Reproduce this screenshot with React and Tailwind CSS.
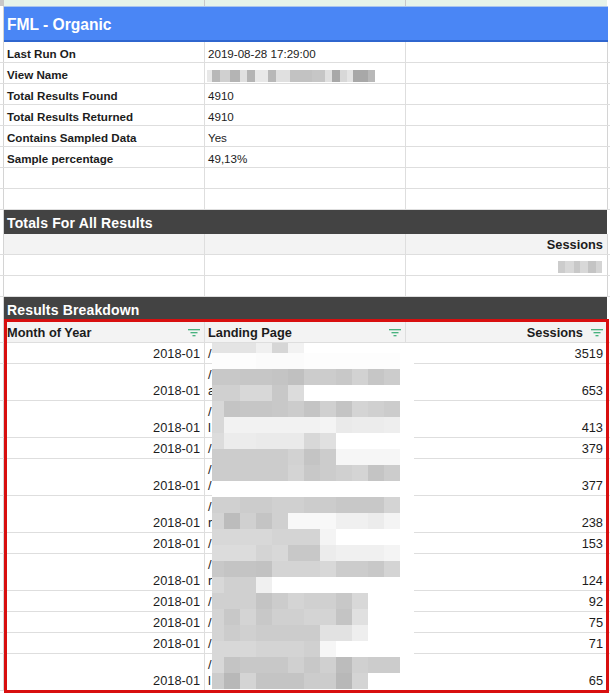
const FONT = "font-['Liberation_Sans',Arial,sans-serif]";

// pixelated blur over the landing page column, one line per 16px band
const mosaic = [
  ['e4','e4','e4','f0','d6','f2','ff','ff','ff','ff','ff','ff'],
  ['fd','fd','fd','fb','fb','fb','fd','fd','fd','fd','fd','fd'],
  ['c8','c8','c6','c6','c4','c0','cc','cc','c8','d2','c6','cc'],
  ['d0','d0','d8','d8','c8','dc','ff','ff','ff','ff','ff','ff'],
  ['d8','c4','c6','c6','c8','cc','c4','d0','c4','d4','d0','cc'],
  ['d8','f2','f2','f2','f2','f2','f2','f4','ea','ec','ec','ee'],
  ['dc','ec','ec','ea','ea','ea','d8','e0','ff','ff','ff','ff'],
  ['cc','cc','cc','cc','cc','d2','c4','cc','f6','f6','f6','f6'],
  ['cc','cc','cc','cc','cc','d4','c8','cc','d0','d4','c4','cc'],
  ['ff','ff','ff','ff','ff','ff','ff','ff','ff','ff','ff','ff'],
  ['d0','d0','cc','cc','d0','d0','cc','cc','c8','c8','c8','d4'],
  ['d4','bc','d0','c4','d0','f8','f8','f8','f0','f0','ec','f4'],
  ['d8','d8','d8','d8','d4','d4','d4','f4','ff','ff','ff','ff'],
  ['dc','dc','dc','d4','d8','c8','c8','ec','f0','f0','f0','f4'],
  ['c8','c4','c4','c2','d4','d4','d4','d8','cc','cc','c8','d4'],
  ['d8','d0','d0','f0','ff','ff','ff','ff','ff','ff','ff','ff'],
  ['d0','d0','d0','c4','cc','d4','d0','d0','c8','d8','ff','ff'],
  ['d4','c8','d4','c8','d0','d0','d4','d4','c4','e0','ff','ff'],
  ['d4','cc','d0','cc','cc','cc','cc','e2','e2','ee','ff','ff'],
  ['d8','d8','d8','d4','d4','d4','d0','f6','ff','ff','ff','ff'],
  ['d8','c4','c8','c8','c8','d0','c8','d0','bc','d0','cc','cc'],
  ['cc','b8','d4','c4','c4','c4','cc','cc','b8','d4','ff','ff'],
];
const mosaicX = [0, 12, 28, 44, 60, 76, 92, 108, 124, 140, 156, 172, 188];

const viewNameCells = [
  [0, 5, 'e8'], [5, 8, 'b8'], [13, 10, 'd0'], [23, 10, 'b4'], [33, 7, 'e0'], [40, 8, 'b4'],
  [48, 13, 'e8'], [61, 8, 'b8'], [69, 14, 'e0'], [83, 22, 'c2'], [105, 13, 'c6'], [118, 7, 'e0'],
  [125, 8, 'a8'], [133, 7, 'd8'], [140, 6, 'e4'], [146, 15, 'a8'], [161, 7, 'b8'],
];

const sessionCells = [
  [0, 7, 'cc'], [7, 9, 'd8'], [16, 6, 'c8'], [22, 8, 'd8'], [30, 8, 'c4'], [38, 6, 'd4'],
];

const infoRows = [
  ['Last Run On', '2019-08-28 17:29:00'],
  ['View Name', ''],
  ['Total Results Found', '4910'],
  ['Total Results Returned', '4910'],
  ['Contains Sampled Data', 'Yes'],
  ['Sample percentage', '49,13%'],
  ['', ''],
  ['', ''],
];

const dataRows = [
  ['/', 3519, false],
  ['/\na', 653, true],
  ['/\nl', 413, true],
  ['/', 379, false],
  ['/\n/', 377, true],
  ['/\nr', 238, true],
  ['/', 153, false],
  ['/\nr', 124, true],
  ['/', 92, false],
  ['/', 75, false],
  ['/', 71, false],
  ['/\nl', 65, true],
];

function Row({ height, bg = 'bg-white', children }) {
  return (
    <div className={`flex ${height} border-b border-[#dedede]`}>
      <div className="w-[4px] shrink-0 border-r border-[#d4d4d4]" />
      <div className={`grid grid-cols-[201px_201px_201px] ${bg}`}>{children}</div>
      <div className="w-[3px] border-l border-[#d4d4d4]" />
    </div>
  );
}

function Cell({ right, bold, small, last, children }) {
  return (
    <div
      className={`flex items-end whitespace-pre-line px-[3px] leading-[16px] text-[#1c1c1c] ${
        small ? 'text-[11.6px]' : 'pb-px text-[12.8px]'
      } ${right ? 'justify-end pr-1 text-right' : ''} ${bold ? 'font-bold' : ''} ${
        last ? '' : 'border-r border-[#dedede]'
      }`}
    >
      {children}
    </div>
  );
}

function FilterIcon() {
  return (
    <svg width="12" height="8" viewBox="0 0 12 8" className="absolute right-[4px] top-[7px]">
      <path d="M0 .75h12M2.5 3.75h7M4.5 6.75h3" stroke="#0f9d58" strokeWidth="1.2" fill="none" />
    </svg>
  );
}

function HeaderCell({ right, last, children }) {
  return (
    <div
      className={`relative flex items-end px-[3px] pb-px text-[12.8px] font-bold leading-[16px] text-[#1c1c1c] ${
        right ? 'justify-end pr-[24px]' : ''
      } ${last ? '' : 'border-r border-[#dedede]'}`}
    >
      {children}
      <FilterIcon />
    </div>
  );
}

function DarkBar({ height, children }) {
  return (
    <div className={`flex ${height}`}>
      <div className="w-[4px] shrink-0 border-r border-[#d4d4d4]" />
      <div className="w-[603px] bg-[#434343] pl-[3px] text-[14px] font-bold leading-[26px] tracking-[0.15px] text-white">
        {children}
      </div>
    </div>
  );
}

function Mosaic() {
  return (
    <svg width="202" height="347" shapeRendering="crispEdges" className="absolute left-[212px] top-[343px]">
      <rect width="202" height="347" fill="#fff" />
      {mosaic.map((band, r) =>
        band.map((c, i) => (
          <rect
            key={`${r}-${i}`}
            x={mosaicX[i]}
            y={r === 0 ? 0 : 10 + (r - 1) * 16}
            width={mosaicX[i + 1] - mosaicX[i]}
            height={r === 0 ? 10 : 16}
            fill={`#${c}${c}${c}`}
          />
        ))
      )}
    </svg>
  );
}

function BlurStrip({ cells, className, width }) {
  return (
    <svg width={width} height="12" shapeRendering="crispEdges" className={className}>
      {cells.map(([x, w, c]) => (
        <rect key={x} x={x} y="0" width={w} height="12" fill={`#${c}${c}${c}`} />
      ))}
    </svg>
  );
}

export default function App() {
  return (
    <div className={`relative h-[694px] w-[610px] overflow-hidden bg-white ${FONT}`}>
      {/* sheet column strip */}
      <div className="flex h-[6px]">
        <div className="w-[4px] bg-[#c8c8c8]" />
        <div className="grid w-[603px] grid-cols-[201px_201px_201px] bg-[#e6f3ea]">
          <div className="border-r border-[#c8c8c8]" />
          <div className="border-r border-[#c8c8c8]" />
          <div />
        </div>
      </div>

      {/* title */}
      <div className="flex h-[36px]">
        <div className="w-[4px] shrink-0 border-r border-[#d4d4d4]" />
        <div className="h-[36px] w-[604px] border-t border-b-2 border-t-[#a9c4ee] border-b-[#2f66cf] bg-[#4a86f5] pl-[3px] text-[15.6px] font-bold leading-[35px] text-white">
          FML - Organic
        </div>
      </div>

      {/* report info */}
      {infoRows.map(([label, value], i) => (
        <Row key={i} height="h-[21px]">
          <Cell bold small>{label}</Cell>
          <Cell small>{value}</Cell>
          <Cell last />
        </Row>
      ))}

      <DarkBar height="h-[24px]">Totals For All Results</DarkBar>

      <Row height="h-[21px]" bg="bg-[#f3f3f3]">
        <Cell />
        <Cell />
        <Cell right bold last>Sessions</Cell>
      </Row>
      <Row height="h-[21px]">
        <Cell />
        <Cell />
        <Cell last />
      </Row>
      <Row height="h-[21px]">
        <Cell />
        <Cell />
        <Cell last />
      </Row>

      <DarkBar height="h-[25px]">Results Breakdown</DarkBar>

      <Row height="h-[21px]" bg="bg-[#f3f3f3]">
        <HeaderCell>Month of Year</HeaderCell>
        <HeaderCell>Landing Page</HeaderCell>
        <HeaderCell right last>Sessions</HeaderCell>
      </Row>

      {dataRows.map(([page, sessions, tall], i) => (
        <Row key={i} height={tall ? 'h-[37px]' : 'h-[21px]'}>
          <Cell right>2018-01</Cell>
          <Cell>{page}</Cell>
          <Cell right last>{sessions}</Cell>
        </Row>
      ))}

      <BlurStrip cells={viewNameCells} width={168} className="absolute left-[207px] top-[70px]" />
      <BlurStrip cells={sessionCells} width={44} className="absolute left-[558px] top-[261px]" />
      <Mosaic />

      {/* red selection frame */}
      <div className="absolute left-[4px] top-[319px] h-[374px] w-[605px] border-[3px] border-[#d80f0f]" />
    </div>
  );
}
